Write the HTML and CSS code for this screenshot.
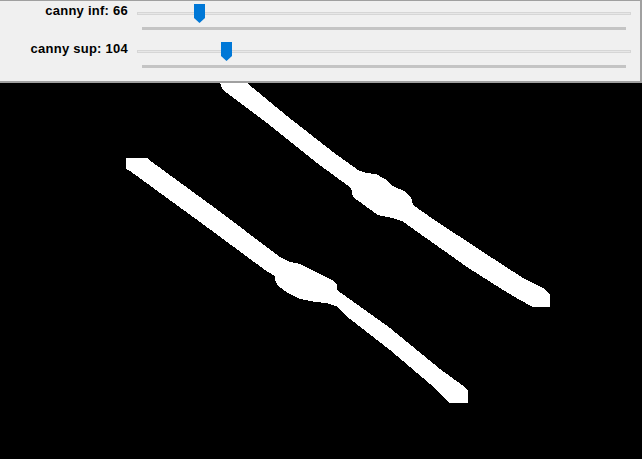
FILE: index.html
```html
<!DOCTYPE html>
<html>
<head>
<meta charset="utf-8">
<link rel="stylesheet" href="styles.css">
</head>
<body>
<div class="window">
  <div class="panel">
    <div class="row">
      <div class="label">canny inf: 66</div>
      <div class="slider">
        <div class="track"></div>
        <div class="ticks"></div>
        <svg class="thumb" style="left:57px" width="11" height="19" viewBox="0 0 11 19"><polygon points="0,0 11,0 11,14 5.5,19 0,14" fill="#0078d7"/></svg>
      </div>
    </div>
    <div class="row">
      <div class="label">canny sup: 104</div>
      <div class="slider">
        <div class="track"></div>
        <div class="ticks"></div>
        <svg class="thumb" style="left:84px" width="11" height="19" viewBox="0 0 11 19"><polygon points="0,0 11,0 11,14 5.5,19 0,14" fill="#0078d7"/></svg>
      </div>
    </div>
  </div>
  <svg class="image" width="642" height="376" viewBox="0 83 642 376" shape-rendering="crispEdges">
    <rect x="0" y="83" width="642" height="376" fill="#000"/>
    <polygon fill="#fff" points="220,83 247,83 287,116 333,152 358,170 366,173 376,174 385,179 393,186 404,191 411,197 413,205 433,219 483,252 523,278 543,288 550,294 550,307 533,307 520,300 500,288 467,267 402,221 392,218 378,215 368,208 360,202 353,197 351,188 317,163 267,123 223,90"/>
    <polygon fill="#fff" points="126,158 147,158 152,162 215,208 280,257 290,262 300,264 312,270 324,276 334,281 337,285 337,290 390,328 440,369 462,385 468,391 468,403 450,403 430,384 390,350 345,315 336,306 326,303 316,302 300,299 288,293 278,286 275,280 275,276 265,270 200,222 130,171 126,169"/>
  </svg>
</div>
</body>
</html>
```

FILE: styles.css
```css
html, body {
  margin: 0;
  padding: 0;
  background: #000;
}

.window {
  width: 642px;
  height: 459px;
  overflow: hidden;
  display: flex;
  flex-direction: column;
}

.panel {
  height: 80px;
  background: #f0f0f0;
  border-top: 1px solid #a0a0a0;
  border-bottom: 2px solid #a0a0a0;
  border-right: 2px solid #a0a0a0;
  display: flex;
  flex-direction: column;
}

.row {
  height: 38px;
  display: flex;
  align-items: flex-start;
}

.label {
  width: 128px;
  margin-top: 2px;
  text-align: right;
  font-family: "Liberation Sans", Arial, sans-serif;
  font-weight: bold;
  font-size: 13px;
  letter-spacing: 0.25px;
  line-height: 16px;
  color: #000;
  white-space: nowrap;
}

.slider {
  position: relative;
  margin-left: 9px;
  width: 494px;
  height: 38px;
}

.track {
  margin-top: 11px;
  height: 1px;
  background: #e7e7e7;
  border: 1px solid #d6d6d6;
}

.ticks {
  margin-top: 12px;
  margin-left: 5px;
  width: 484px;
  height: 3px;
  background: #c4c4c4;
}

.thumb {
  position: absolute;
  top: 3px;
  display: block;
}

.image {
  display: block;
  flex: none;
}
```
